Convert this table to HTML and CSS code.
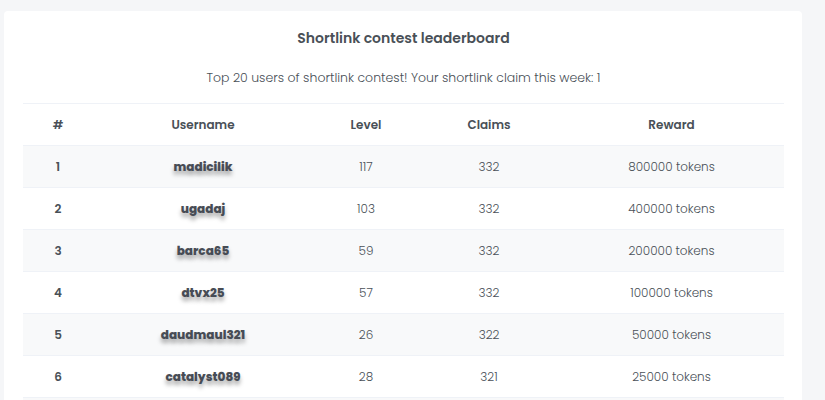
FILE: index.html
```html
<!DOCTYPE html>
<html>
<head>
<meta charset="utf-8">
<link rel="stylesheet" href="styles.css">
</head>
<body>
<div class="page">
  <div class="card">
    <h4 class="title">Shortlink contest leaderboard</h4>
    <p class="subtitle">Top 20 users of shortlink contest! Your shortlink claim this week: 1</p>
    <table class="board">
      <colgroup>
        <col class="c-rank"><col class="c-user"><col class="c-level"><col class="c-claims"><col class="c-reward">
      </colgroup>
      <thead>
        <tr><th>#</th><th>Username</th><th>Level</th><th>Claims</th><th>Reward</th></tr>
      </thead>
      <tbody>
        <tr><th>1</th><td class="user">madicilik</td><td>117</td><td>332</td><td>800000 tokens</td></tr>
        <tr><th>2</th><td class="user">ugadaj</td><td>103</td><td>332</td><td>400000 tokens</td></tr>
        <tr><th>3</th><td class="user">barca65</td><td>59</td><td>332</td><td>200000 tokens</td></tr>
        <tr><th>4</th><td class="user">dtvx25</td><td>57</td><td>332</td><td>100000 tokens</td></tr>
        <tr><th>5</th><td class="user">daudmaul321</td><td>26</td><td>322</td><td>50000 tokens</td></tr>
        <tr><th>6</th><td class="user">catalyst089</td><td>28</td><td>321</td><td>25000 tokens</td></tr>
        <tr class="stub"><th></th><td></td><td></td><td></td><td></td></tr>
      </tbody>
    </table>
  </div>
  <div class="edge"></div>
</div>
</body>
</html>
```
FILE: styles.css
```css
html, body {
  margin: 0;
  padding: 0;
  background: #f5f6f8;
  height: 400px;
  overflow: hidden;
}
body {
  font-family: "Poppins", "Open Sans", "Liberation Sans", sans-serif;
  color: #495057;
}
.page {
  display: flex;
  padding: 11px 0 0 4px;
}
.card {
  width: 798px;
  background: #fff;
  border-radius: 4px;
  padding: 0 18px 0 19px;
  box-sizing: border-box;
  height: 500px;
}
.edge {
  flex: 1;
}
.title {
  margin: 0;
  padding-top: 17px;
  height: 21px;
  line-height: 21px;
  text-align: center;
  font-size: 14px;
  font-weight: 600;
  color: #495057;
}
.subtitle {
  margin: 0;
  padding-top: 18px;
  height: 22px;
  line-height: 22px;
  text-align: center;
  font-size: 12.5px;
  font-weight: 300;
  color: #495057;
  padding-bottom: 14px;
}
.board {
  width: 761px;
  border-collapse: collapse;
  table-layout: fixed;
  border-top: 1px solid #eff2f7;
}
.c-rank { width: 70px; }
.c-user { width: 220px; }
.c-level { width: 106px; }
.c-claims { width: 140px; }
.c-reward { width: 225px; }
.board th, .board td {
  height: 41px;
  padding: 0;
  text-align: center;
  vertical-align: middle;
  border-bottom: 1px solid #eff2f7;
  font-size: 12px;
}
.board th {
  font-weight: 600;
  color: #495057;
}
.board td {
  font-weight: 300;
  color: #495057;
}
.board tbody tr:nth-child(odd) {
  background: #f8f9fa;
}
.board td.user {
  font-weight: 800;
  color: #474c55;
  text-shadow: 0 4px 4px rgba(0, 0, 0, 0.35);
}
```
